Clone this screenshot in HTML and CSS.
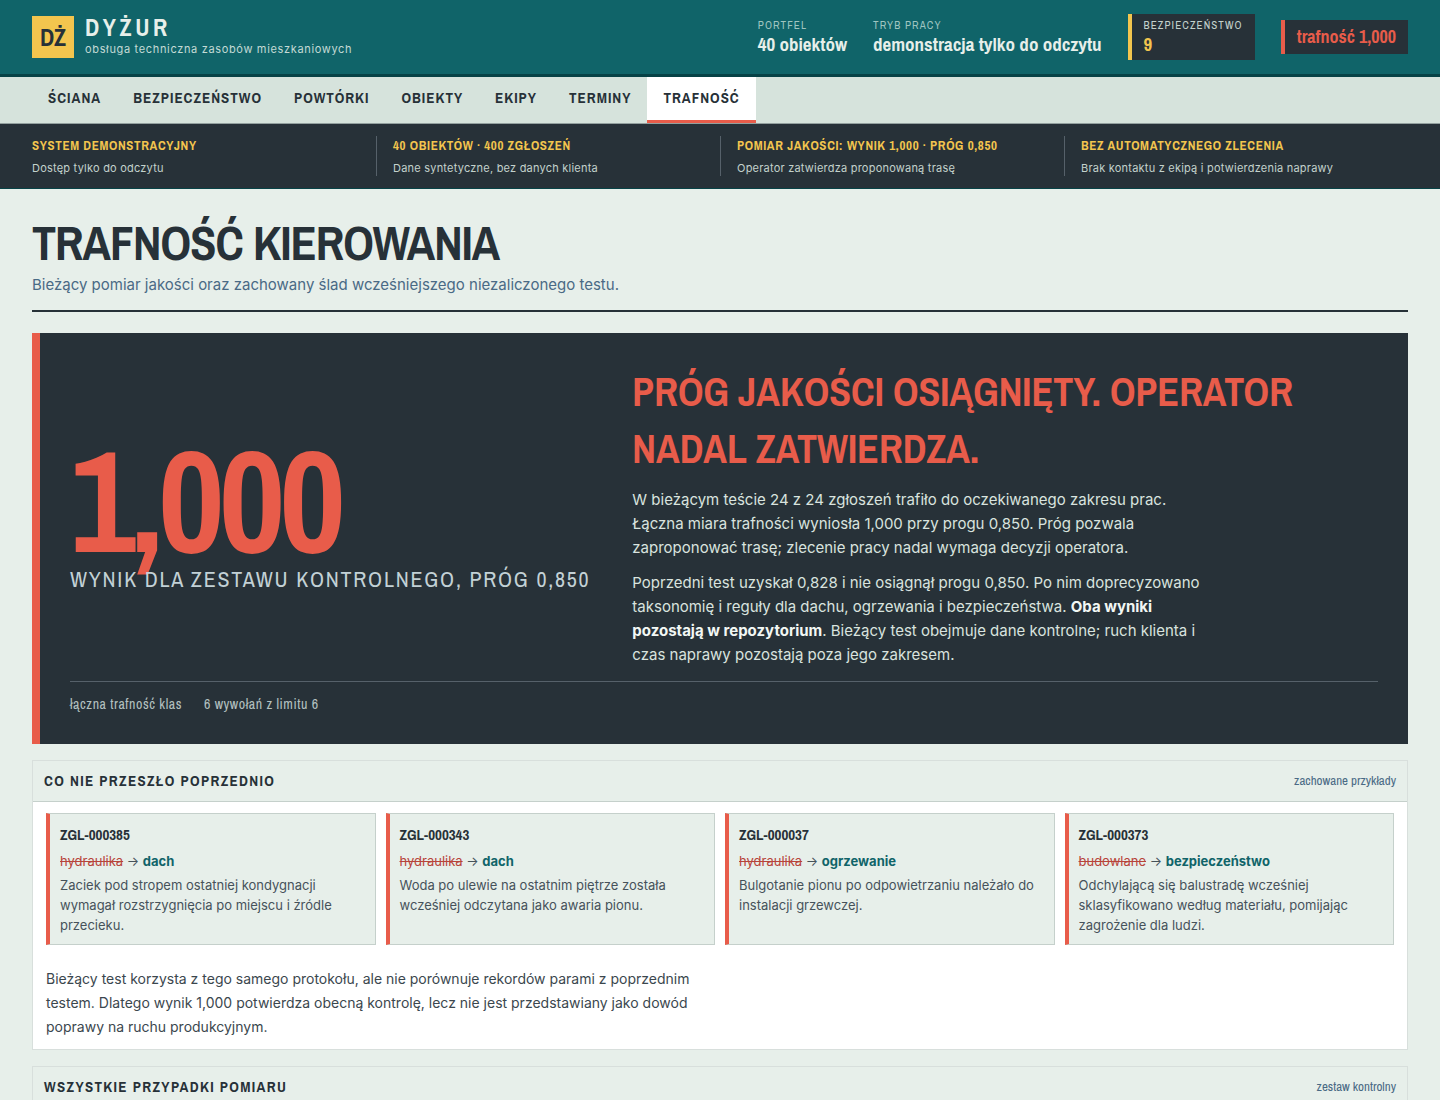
FILE: index.html
```html
<!DOCTYPE html>
<html lang="pl">
<head>
<meta charset="utf-8">
<meta name="viewport" content="width=device-width, initial-scale=1">
<title>Dyżur – trafność kierowania</title>
<link rel="stylesheet" href="styles.css">
</head>
<body>
<header class="topbar">
  <div class="brand">
    <div class="brand-mark">DŻ</div>
    <div>
      <div class="brand-name">DYŻUR</div>
      <div class="brand-sub">obsługa techniczna zasobów mieszkaniowych</div>
    </div>
  </div>
  <div class="facts">
    <div class="fact"><span class="fact-label">PORTFEL</span><strong class="fact-value">40 obiektów</strong></div>
    <div class="fact"><span class="fact-label">TRYB PRACY</span><strong class="fact-value">demonstracja tylko do odczytu</strong></div>
    <div class="fact fact-alert"><span class="fact-label">BEZPIECZEŃSTWO</span><strong class="fact-value">9</strong></div>
    <div class="score">trafność 1,000</div>
  </div>
</header>
<nav class="tabs" aria-label="Widoki">
  <a class="tab" href="#sciana">ŚCIANA</a>
  <a class="tab" href="#bezpieczenstwo">BEZPIECZEŃSTWO</a>
  <a class="tab" href="#powtorki">POWTÓRKI</a>
  <a class="tab" href="#obiekty">OBIEKTY</a>
  <a class="tab" href="#ekipy">EKIPY</a>
  <a class="tab" href="#terminy">TERMINY</a>
  <a class="tab tab-active" href="#trafnosc" aria-current="page">TRAFNOŚĆ</a>
</nav>
<section class="notes" aria-label="Zasady systemu">
  <div class="note"><strong class="note-title">SYSTEM DEMONSTRACYJNY</strong><span class="note-text">Dostęp tylko do odczytu</span></div>
  <div class="note"><strong class="note-title">40 OBIEKTÓW · 400 ZGŁOSZEŃ</strong><span class="note-text">Dane syntetyczne, bez danych klienta</span></div>
  <div class="note"><strong class="note-title">POMIAR JAKOŚCI: WYNIK 1,000 · PRÓG 0,850</strong><span class="note-text">Operator zatwierdza proponowaną trasę</span></div>
  <div class="note"><strong class="note-title">BEZ AUTOMATYCZNEGO ZLECENIA</strong><span class="note-text">Brak kontaktu z ekipą i potwierdzenia naprawy</span></div>
</section>
<main class="page" id="trafnosc">
  <div class="page-head">
    <h1 class="page-title">TRAFNOŚĆ KIEROWANIA</h1>
    <p class="page-lead">Bieżący pomiar jakości oraz zachowany ślad wcześniejszego niezaliczonego testu.</p>
  </div>
  <section class="hero">
    <div class="hero-body">
      <div class="result">
        <div class="result-number">1,000</div>
        <div class="result-label">WYNIK DLA ZESTAWU KONTROLNEGO, PRÓG 0,850</div>
      </div>
      <div class="hero-copy">
        <h2 class="hero-title">PRÓG JAKOŚCI OSIĄGNIĘTY. OPERATOR NADAL ZATWIERDZA.</h2>
        <p class="hero-text">W bieżącym teście 24 z 24 zgłoszeń trafiło do oczekiwanego zakresu prac. Łączna miara trafności wyniosła 1,000 przy progu 0,850. Próg pozwala zaproponować trasę; zlecenie pracy nadal wymaga decyzji operatora.</p>
        <p class="hero-text">Poprzedni test uzyskał 0,828 i nie osiągnął progu 0,850. Po nim doprecyzowano taksonomię i reguły dla dachu, ogrzewania i bezpieczeństwa. <strong>Oba wyniki pozostają w repozytorium</strong>. Bieżący test obejmuje dane kontrolne; ruch klienta i czas naprawy pozostają poza jego zakresem.</p>
      </div>
    </div>
    <div class="hero-foot"><span>łączna trafność klas</span><span>6 wywołań z limitu 6</span></div>
  </section>
  <section class="panel">
    <div class="panel-head"><h2 class="panel-title">CO NIE PRZESZŁO POPRZEDNIO</h2><span class="panel-note">zachowane przykłady</span></div>
    <div class="cases">
      <article class="case">
        <h3 class="case-id">ZGL-000385</h3>
        <p class="case-route"><del>hydraulika</del> → <strong>dach</strong></p>
        <p class="case-text">Zaciek pod stropem ostatniej kondygnacji wymagał rozstrzygnięcia po miejscu i źródle przecieku.</p>
      </article>
      <article class="case">
        <h3 class="case-id">ZGL-000343</h3>
        <p class="case-route"><del>hydraulika</del> → <strong>dach</strong></p>
        <p class="case-text">Woda po ulewie na ostatnim piętrze została wcześniej odczytana jako awaria pionu.</p>
      </article>
      <article class="case">
        <h3 class="case-id">ZGL-000037</h3>
        <p class="case-route"><del>hydraulika</del> → <strong>ogrzewanie</strong></p>
        <p class="case-text">Bulgotanie pionu po odpowietrzaniu należało do instalacji grzewczej.</p>
      </article>
      <article class="case">
        <h3 class="case-id">ZGL-000373</h3>
        <p class="case-route"><del>budowlane</del> → <strong>bezpieczeństwo</strong></p>
        <p class="case-text">Odchylającą się balustradę wcześniej sklasyfikowano według materiału, pomijając zagrożenie dla ludzi.</p>
      </article>
    </div>
    <p class="panel-text">Bieżący test korzysta z tego samego protokołu, ale nie porównuje rekordów parami z poprzednim testem. Dlatego wynik 1,000 potwierdza obecną kontrolę, lecz nie jest przedstawiany jako dowód poprawy na ruchu produkcyjnym.</p>
  </section>
  <section class="panel">
    <div class="panel-head"><h2 class="panel-title">WSZYSTKIE PRZYPADKI POMIARU</h2><span class="panel-note">zestaw kontrolny</span></div>
  </section>
</main>
</body>
</html>
```
FILE: styles.css
```css
:root {
  --teal: #106469;
  --teal-dark: #074246;
  --ink: #273138;
  --mint: #e7efea;
  --mint-deep: #d6e3dc;
  --yellow: #f3c54e;
  --red: #e85c4a;
  --slate: #4a6a85;
  --line: #c5d0cb;
  --narrow: "Liberation Sans Narrow", "Arial Narrow", "Archivo Narrow", "Liberation Sans", sans-serif;
  --text: Inter, "Liberation Sans", sans-serif;
}

* { box-sizing: border-box; }

body {
  margin: 0;
  background: var(--mint);
  color: var(--ink);
  font-family: var(--text);
  font-size: 15px;
  line-height: 24px;
}

h1, h2, h3, p { margin: 0; }

.topbar {
  display: flex;
  align-items: center;
  justify-content: space-between;
  gap: 24px;
  padding: 14px 32px;
  background: var(--teal);
  border-bottom: 3px solid var(--teal-dark);
  color: var(--mint);
}

.brand { display: flex; align-items: center; gap: 11px; }

.brand-mark {
  display: grid;
  place-items: center;
  width: 42px;
  height: 42px;
  background: var(--yellow);
  color: var(--ink);
  font: 700 24px/24px var(--narrow);
}

.brand-name {
  font: 700 24px/25px var(--narrow);
  letter-spacing: 0.15em;
}

.brand-sub {
  color: #c3dad5;
  font-size: 11px;
  line-height: 19px;
  letter-spacing: 0.06em;
}

.facts { display: flex; align-items: center; gap: 26px; }

.fact { display: flex; flex-direction: column; font-family: var(--narrow); }

.fact-label {
  color: #9fc4c0;
  font-size: 11px;
  line-height: 14px;
  letter-spacing: 0.1em;
}

.fact-value { font-size: 19px; line-height: 24px; }

.fact-alert {
  padding: 4px 12px;
  background: var(--ink);
  border-left: 4px solid var(--yellow);
}

.fact-alert .fact-label { color: #c3d1cc; }
.fact-alert .fact-value { color: var(--yellow); }

.score {
  padding: 5px 12px;
  background: var(--ink);
  border-left: 4px solid var(--red);
  color: var(--red);
  font: 700 18px/24px var(--narrow);
}

.tabs {
  display: flex;
  padding: 0 32px;
  background: var(--mint-deep);
  border-bottom: 1px solid #93a09f;
}

.tab {
  padding: 10px 16px 12px;
  border-bottom: 3px solid transparent;
  color: var(--ink);
  font: 700 15px/21px var(--narrow);
  letter-spacing: 1px;
  text-decoration: none;
}

.tab-active { background: #fff; border-bottom-color: var(--red); }

.notes {
  display: grid;
  grid-template-columns: repeat(4, minmax(0, 1fr));
  padding: 12px 32px;
  background: var(--ink);
  border-bottom: 1px solid var(--teal-dark);
}

.note { display: flex; flex-direction: column; gap: 4px; }
.note + .note { padding-left: 16px; border-left: 1px solid #56616a; }

.note-title {
  color: var(--yellow);
  font: 700 13px/20px var(--narrow);
  letter-spacing: 0.05em;
}

.note-text {
  color: #c3d1cc;
  font-size: 11px;
  line-height: 16px;
  letter-spacing: 0.02em;
}

.page { padding: 30px 32px; }

.page-head {
  padding-bottom: 13px;
  margin-bottom: 21px;
  border-bottom: 2px solid var(--ink);
}

.page-title {
  margin-bottom: 6px;
  font: 700 48px/48px var(--narrow);
  letter-spacing: -0.02em;
}

.page-lead { color: var(--slate); }

.hero {
  padding: 30px;
  background: var(--ink);
  border-left: 8px solid var(--red);
  color: #d9e3df;
}

.hero-body {
  display: grid;
  grid-template-columns: auto minmax(0, 1fr);
  align-items: center;
  gap: 42px;
}

.result { font-family: var(--narrow); }

.result-number {
  color: var(--red);
  font-size: 144px;
  font-weight: 700;
  line-height: 128px;
  letter-spacing: -5px;
}

.result-label {
  color: #c3d1d6;
  font-size: 22px;
  line-height: 31px;
  letter-spacing: 0.08em;
}

.hero-title {
  color: var(--red);
  font: 700 40px/57px var(--narrow);
}

.hero-text { max-width: 580px; margin-top: 11px; }
.hero-text strong { color: #f2f7f4; }

.hero-foot {
  display: flex;
  gap: 22px;
  margin-top: 14px;
  padding-top: 12px;
  border-top: 1px solid #56616a;
  color: #b4c1c0;
  font: 400 14px/20px var(--narrow);
  letter-spacing: 0.04em;
}

.panel {
  margin-top: 16px;
  background: #fff;
  border: 1px solid #d8dfdc;
}

.panel-head {
  display: flex;
  align-items: center;
  justify-content: space-between;
  padding: 9px 11px;
  background: var(--mint);
  border-bottom: 1px solid var(--line);
}

.panel-title {
  font: 700 15px/22px var(--narrow);
  letter-spacing: 0.09em;
}

.panel-note { color: var(--slate); font: 400 13px/22px var(--narrow); }

.cases {
  display: grid;
  grid-template-columns: repeat(4, minmax(0, 1fr));
  gap: 10px;
  padding: 11px 13px;
}

.case {
  padding: 10px 10px 9px;
  background: var(--mint);
  border: 1px solid var(--line);
  border-left: 4px solid var(--red);
  color: #46525a;
  font-size: 13px;
  line-height: 20px;
}

.case-id { color: var(--ink); font: 700 15px/22px var(--narrow); }
.case-route { margin: 5px 0 4px; }
.case-route del { color: #b8443a; }
.case-route strong { color: var(--teal); }

.panel-text {
  max-width: 690px;
  padding: 11px 13px 10px;
  color: #3b474e;
  font-size: 14px;
}
```
